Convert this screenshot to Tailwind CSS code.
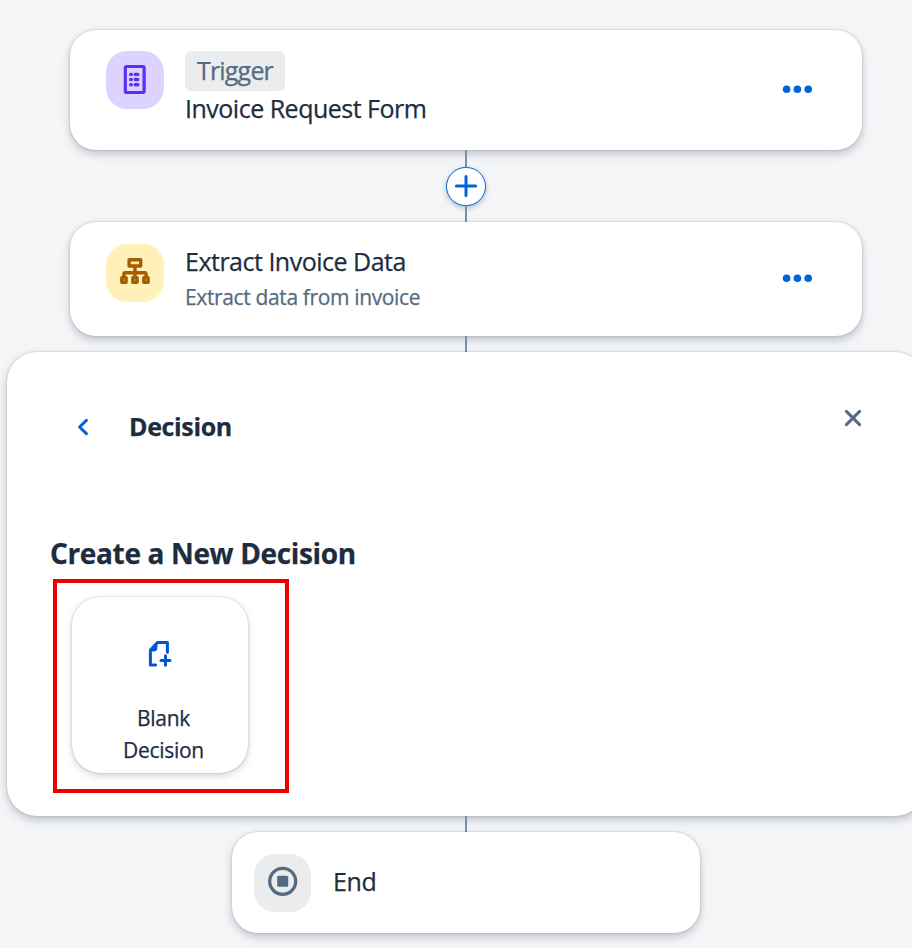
<!DOCTYPE html>
<html lang="en">
<head>
<meta charset="utf-8">
<title>Process Builder</title>
<script src="https://cdn.jsdelivr.net/npm/@tailwindcss/browser@4"></script>
</head>
<body class="h-[948px] w-full overflow-hidden bg-[#f4f5f7] font-['Open_Sans','Noto_Sans',sans-serif] text-[#1d2d3e] [-webkit-text-stroke:0.25px_currentColor]">
<main class="flex w-[932px] flex-col items-center pt-[30px]">

  <section class="flex h-[120px] w-[792px] items-start rounded-[26px] bg-white pl-9 pr-[50px] shadow-[0_0_2px_rgba(34,53,72,0.3),0_4px_8px_rgba(34,53,72,0.25)]">
    <div class="mt-[21px] flex size-[58px] shrink-0 items-center justify-center rounded-[21px] bg-[#dcd3ff]">
      <svg class="size-[32px]" viewBox="0 0 32 32" fill="none" stroke="#5b2ef9">
        <rect x="6.3" y="2.5" width="18.8" height="26" rx="1.2" stroke-width="3.2"/>
        <g stroke-width="3.4" stroke-linecap="round"><path d="M11.7 10.4h.6M16.2 10.4h2.6M11.7 15.5h.6M16.2 15.5h2.6M11.7 20.8h.6M16.2 20.8h2.6"/></g>
      </svg>
    </div>
    <div class="ml-[21px] mt-[21px] flex flex-col items-start">
      <span class="flex h-10 w-[100px] items-center justify-center rounded-[6px] bg-[#eaecee] text-[25px] tracking-[-0.8px] text-[#556b82]">Trigger</span>
      <h2 class="-mt-px text-[25px] leading-9 tracking-[-0.5px] whitespace-nowrap">Invoice Request Form</h2>
    </div>
    <svg class="ml-auto mt-[55px] h-2 w-[30px]" viewBox="0 0 30 8" fill="#0064d9"><circle cx="4.6" cy="4.2" r="3.8"/><circle cx="15.4" cy="4.2" r="3.8"/><circle cx="26.2" cy="4.2" r="3.8"/></svg>
  </section>

  <div class="flex h-[72px] flex-col items-center">
    <div class="h-[17px] w-[2px] bg-[#788fa6]"></div>
    <button class="flex h-[39px] w-10 items-center justify-center rounded-full border border-[#0064d9] bg-white shadow-[0_2px_5px_rgba(34,53,72,0.3)]">
      <svg class="mb-px size-6" viewBox="0 0 24 24" stroke="#0064d9" stroke-width="3" stroke-linecap="round"><path d="M2.4 12h19.2M12 2.4v19.2"/></svg>
    </button>
    <div class="h-4 w-[2px] bg-[#788fa6]"></div>
  </div>

  <section class="flex h-[114px] w-[792px] items-start rounded-[26px] bg-white pl-9 pr-[50px] shadow-[0_0_2px_rgba(34,53,72,0.3),0_4px_8px_rgba(34,53,72,0.25)]">
    <div class="mt-[22px] flex size-[58px] shrink-0 items-center justify-center rounded-[21px] bg-[#fff1b8]">
      <svg class="size-[32px]" viewBox="0 0 32 32" fill="none" stroke="#a45d00" stroke-width="3.4" stroke-linejoin="round">
        <rect x="10.1" y="2.8" width="11.6" height="6.2"/>
        <path d="M16 9v11M4.9 20v-2.8q0-1.4 1.4-1.4h19.4q1.4 0 1.4 1.4V20"/>
        <rect x="2.8" y="20.8" width="4.3" height="4.4"/><rect x="13.8" y="20.8" width="4.3" height="4.4"/><rect x="24.8" y="20.8" width="4.3" height="4.4"/>
      </svg>
    </div>
    <div class="ml-[21px] mt-[21px] whitespace-nowrap">
      <h2 class="text-[25px] leading-9 tracking-[-0.5px]">Extract Invoice Data</h2>
      <p class="mt-[2px] text-[21px] leading-8 tracking-[-0.36px] text-[#556b82]">Extract data from invoice</p>
    </div>
    <svg class="ml-auto mt-[52px] h-2 w-[30px]" viewBox="0 0 30 8" fill="#0064d9"><circle cx="4.6" cy="4.2" r="3.8"/><circle cx="15.4" cy="4.2" r="3.8"/><circle cx="26.2" cy="4.2" r="3.8"/></svg>
  </section>

  <div class="h-4 w-[2px] bg-[#788fa6]"></div>

  <section class="h-[464px] w-[918px] rounded-[30px] bg-white pl-[43px] shadow-[0_0_2px_rgba(34,53,72,0.3),0_4px_8px_rgba(34,53,72,0.25)]">
    <header class="flex h-[94px] items-start pl-[26px] pr-[63px] pt-[56px]">
      <svg class="mt-[10px] h-[18px] w-[14px]" viewBox="0 0 14 18" fill="none" stroke="#0064d9" stroke-width="3" stroke-linecap="round" stroke-linejoin="round"><path d="M10.4 2.4 3.6 9l6.8 6.6"/></svg>
      <h1 class="ml-[39px] text-[25px] leading-9 font-bold tracking-[-0.35px]">Decision</h1>
      <svg class="ml-auto mt-px size-[18px]" viewBox="0 0 18 18" fill="none" stroke="#556b82" stroke-width="3" stroke-linecap="round"><path d="m2.4 2.4 13.2 13.2M15.6 2.4 2.4 15.6"/></svg>
    </header>
    <h2 class="mt-[87px] text-[28px] leading-10 font-bold tracking-[-0.35px] whitespace-nowrap">Create a New Decision</h2>
    <div class="ml-[3px] mt-[6px] h-[214px] w-[236px] border-4 border-[#eb0000] pl-[15px] pt-[14px]">
      <button class="flex size-[176px] flex-col items-center rounded-[28px] bg-white pt-[43px] shadow-[0_0_2px_rgba(34,53,72,0.3),0_3px_7px_rgba(34,53,72,0.2)]">
        <svg class="h-7 w-6" viewBox="0 0 24 28" fill="none" stroke="#0057d2" stroke-width="3" stroke-linecap="round" stroke-linejoin="round">
          <path d="M7.6 25H2.4V10l7-7.4h10v9.6M13 20.4h9M17.5 15.8v9.4"/><path d="M3 11h3.2q2.7 0 2.7-2.7V3.4z" fill="#0057d2" stroke-width="1"/>
        </svg>
        <span class="ml-[7px] mt-[34px] text-[21px] leading-8 tracking-[-0.3px]">Blank<br>Decision</span>
      </button>
    </div>
  </section>

  <div class="h-4 w-[2px] bg-[#788fa6]"></div>

  <section class="flex h-[101px] w-[468px] items-center rounded-[26px] bg-white pl-[22px] shadow-[0_0_2px_rgba(34,53,72,0.3),0_4px_8px_rgba(34,53,72,0.25)]">
    <div class="flex h-[58px] w-[57px] items-center justify-center rounded-[21px] bg-[#eaecee]">
      <svg class="mb-[3px] size-[30px]" viewBox="0 0 30 30"><circle cx="14.7" cy="15.3" r="13" fill="none" stroke="#556b82" stroke-width="3.3"/><rect x="9.2" y="9.8" width="11" height="11" rx="1.5" fill="#556b82"/></svg>
    </div>
    <h2 class="mb-[2px] ml-[22px] text-[25px] tracking-[-0.4px]">End</h2>
  </section>
</main>
</body>
</html>
